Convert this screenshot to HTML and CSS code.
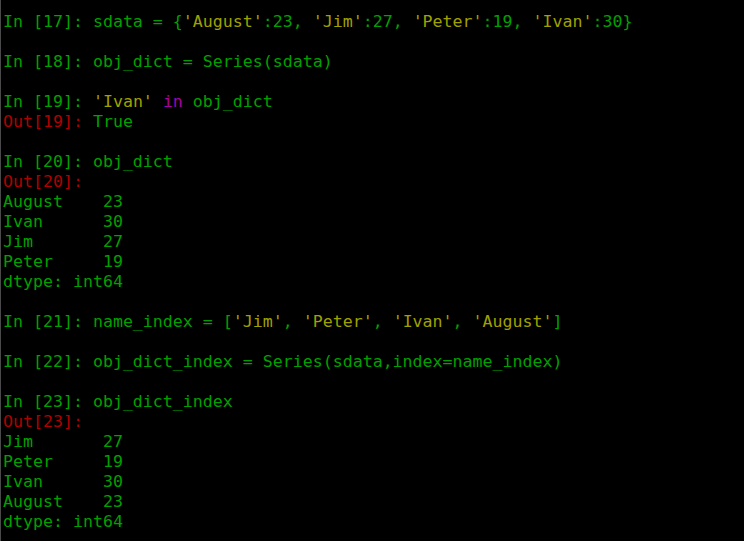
FILE: index.html
```html
<!DOCTYPE html>
<html>
<head>
<meta charset="utf-8">
<link rel="stylesheet" href="styles.css">
</head>
<body>
<pre class="term"><span class="g">In [17]: sdata = {</span><span class="s">'August'</span><span class="g">:23, </span><span class="s">'Jim'</span><span class="g">:27, </span><span class="s">'Peter'</span><span class="g">:19, </span><span class="s">'Ivan'</span><span class="g">:30}</span>

<span class="g">In [18]: obj_dict = Series(sdata)</span>

<span class="g">In [19]: </span><span class="s">'Ivan'</span><span class="g"> </span><span class="k">in</span><span class="g"> obj_dict</span>
<span class="r">Out[19]: </span><span class="g">True</span>

<span class="g">In [20]: obj_dict</span>
<span class="r">Out[20]:</span>
<span class="g">August    23
Ivan      30
Jim       27
Peter     19
dtype: int64</span>

<span class="g">In [21]: name_index = [</span><span class="s">'Jim'</span><span class="g">, </span><span class="s">'Peter'</span><span class="g">, </span><span class="s">'Ivan'</span><span class="g">, </span><span class="s">'August'</span><span class="g">]</span>

<span class="g">In [22]: obj_dict_index = Series(sdata,index=name_index)</span>

<span class="g">In [23]: obj_dict_index</span>
<span class="r">Out[23]:</span>
<span class="g">Jim       27
Peter     19
Ivan      30
August    23
dtype: int64</span></pre>
</body>
</html>
```
FILE: styles.css
```css
html, body {
  margin: 0;
  padding: 0;
  background: #000;
  height: 100%;
}
body {
  border-left: 1px solid #4a4a4a;
  box-sizing: border-box;
  overflow: hidden;
}
.term {
  margin: 0;
  padding: 12px 0 0 2px;
  font-family: "DejaVu Sans Mono", "Liberation Mono", monospace;
  font-size: 16.6px;
  line-height: 20px;
  color: #00a000;
  white-space: pre;
}
.g { color: #00a000; }
.s { color: #a0a000; }
.k { color: #a800a8; }
.r { color: #b00000; }
```
